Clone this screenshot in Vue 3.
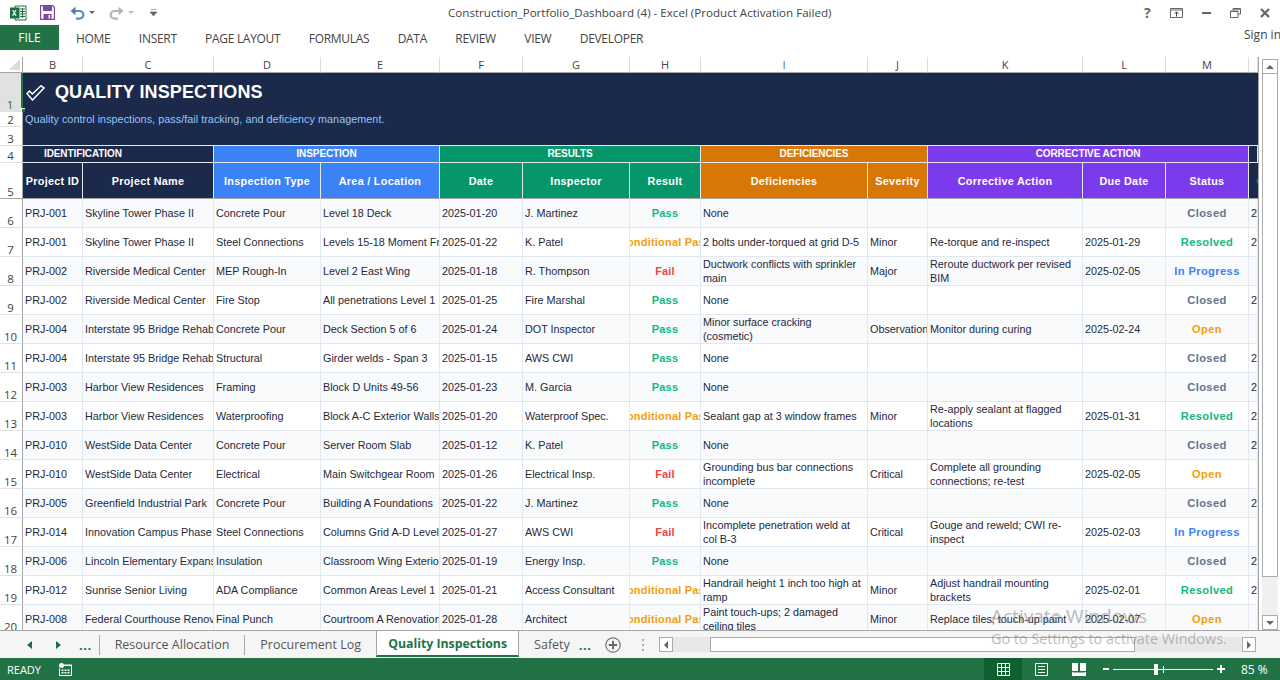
<script setup>
const tabs = ['HOME', 'INSERT', 'PAGE LAYOUT', 'FORMULAS', 'DATA', 'REVIEW', 'VIEW', 'DEVELOPER']
const colLetters = ['B', 'C', 'D', 'E', 'F', 'G', 'H', 'I', 'J', 'K', 'L', 'M', '']
const groups = [
  { t: 'IDENTIFICATION', s: 2, c: 'navy', left: true },
  { t: 'INSPECTION', s: 2, c: 'blue' },
  { t: 'RESULTS', s: 3, c: 'green' },
  { t: 'DEFICIENCIES', s: 2, c: 'orange' },
  { t: 'CORRECTIVE ACTION', s: 3, c: 'purple' },
  { t: '', s: 1, c: 'navy' }
]
const heads = [
  ['Project ID', 'navy'], ['Project Name', 'navy'], ['Inspection Type', 'blue'], ['Area / Location', 'blue'],
  ['Date', 'green'], ['Inspector', 'green'], ['Result', 'green'], ['Deficiencies', 'orange'], ['Severity', 'orange'],
  ['Corrective Action', 'purple'], ['Due Date', 'purple'], ['Status', 'purple']
]
const rows = [
  ['PRJ-001', 'Skyline Tower Phase II', 'Concrete Pour', 'Level 18 Deck', '2025-01-20', 'J. Martinez', 'Pass', 'None', '', '', '', 'Closed'],
  ['PRJ-001', 'Skyline Tower Phase II', 'Steel Connections', 'Levels 15-18 Moment Frames', '2025-01-22', 'K. Patel', 'Conditional Pass', '2 bolts under-torqued at grid D-5', 'Minor', 'Re-torque and re-inspect', '2025-01-29', 'Resolved'],
  ['PRJ-002', 'Riverside Medical Center', 'MEP Rough-In', 'Level 2 East Wing', '2025-01-18', 'R. Thompson', 'Fail', 'Ductwork conflicts with sprinkler main', 'Major', 'Reroute ductwork per revised BIM', '2025-02-05', 'In Progress'],
  ['PRJ-002', 'Riverside Medical Center', 'Fire Stop', 'All penetrations Level 1', '2025-01-25', 'Fire Marshal', 'Pass', 'None', '', '', '', 'Closed'],
  ['PRJ-004', 'Interstate 95 Bridge Rehab', 'Concrete Pour', 'Deck Section 5 of 6', '2025-01-24', 'DOT Inspector', 'Pass', 'Minor surface cracking (cosmetic)', 'Observation', 'Monitor during curing', '2025-02-24', 'Open'],
  ['PRJ-004', 'Interstate 95 Bridge Rehab', 'Structural', 'Girder welds - Span 3', '2025-01-15', 'AWS CWI', 'Pass', 'None', '', '', '', 'Closed'],
  ['PRJ-003', 'Harbor View Residences', 'Framing', 'Block D Units 49-56', '2025-01-23', 'M. Garcia', 'Pass', 'None', '', '', '', 'Closed'],
  ['PRJ-003', 'Harbor View Residences', 'Waterproofing', 'Block A-C Exterior Walls', '2025-01-20', 'Waterproof Spec.', 'Conditional Pass', 'Sealant gap at 3 window frames', 'Minor', 'Re-apply sealant at flagged locations', '2025-01-31', 'Resolved'],
  ['PRJ-010', 'WestSide Data Center', 'Concrete Pour', 'Server Room Slab', '2025-01-12', 'K. Patel', 'Pass', 'None', '', '', '', 'Closed'],
  ['PRJ-010', 'WestSide Data Center', 'Electrical', 'Main Switchgear Room', '2025-01-26', 'Electrical Insp.', 'Fail', 'Grounding bus bar connections incomplete', 'Critical', 'Complete all grounding connections; re-test', '2025-02-05', 'Open'],
  ['PRJ-005', 'Greenfield Industrial Park', 'Concrete Pour', 'Building A Foundations', '2025-01-22', 'J. Martinez', 'Pass', 'None', '', '', '', 'Closed'],
  ['PRJ-014', 'Innovation Campus Phase 1', 'Steel Connections', 'Columns Grid A-D Level 2', '2025-01-27', 'AWS CWI', 'Fail', 'Incomplete penetration weld at col B-3', 'Critical', 'Gouge and reweld; CWI re-inspect', '2025-02-03', 'In Progress'],
  ['PRJ-006', 'Lincoln Elementary Expansion', 'Insulation', 'Classroom Wing Exterior', '2025-01-19', 'Energy Insp.', 'Pass', 'None', '', '', '', 'Closed'],
  ['PRJ-012', 'Sunrise Senior Living', 'ADA Compliance', 'Common Areas Level 1', '2025-01-21', 'Access Consultant', 'Conditional Pass', 'Handrail height 1 inch too high at ramp', 'Minor', 'Adjust handrail mounting brackets', '2025-02-01', 'Resolved'],
  ['PRJ-008', 'Federal Courthouse Renovation', 'Final Punch', 'Courtroom A Renovation', '2025-01-28', 'Architect', 'Conditional Pass', 'Paint touch-ups; 2 damaged ceiling tiles', 'Minor', 'Replace tiles; touch-up paint', '2025-02-07', 'Open']
]
const tone = {
  Pass: 'pass', Fail: 'fail', 'Conditional Pass': 'cond',
  Closed: 'closed', Resolved: 'pass', 'In Progress': 'prog', Open: 'cond'
}
const hasClosedDate = (r) => r[11] === 'Closed' || r[11] === 'Resolved'
</script>

<template>
  <div class="app">
    <header class="titlebar">
      <div class="qat">
        <svg class="ic-xl" width="17" height="16" viewBox="0 0 17 16">
          <path d="M5 1h11v14H5z" fill="#fff" stroke="#217346"/>
          <path d="M10 4h5M10 6.500h5M10 9h5M10 11.500h5M12.500 3v10" stroke="#217346" fill="none"/>
          <rect x="0" y="2.500" width="9.500" height="11" fill="#1d6f42"/>
          <path d="M2.200 5l1.500 2.600L2 10.800h1.400l.9-1.900.9 1.900h1.500L5 7.600 6.500 5H5.200l-.9 1.700L3.500 5z" fill="#fff"/>
        </svg>
        <svg class="ic-save" width="15" height="15" viewBox="0 0 15 15">
          <path d="M.5.500h12l2 2v12H.5z" fill="#fff" stroke="#7d4b9e" stroke-width="1.400"/>
          <rect x="3" y="1" width="9" height="5" fill="#7d4b9e"/>
          <rect x="3.500" y="9" width="8" height="5.500" fill="#7d4b9e"/>
          <rect x="8.500" y="10" width="1.500" height="3.500" fill="#fff"/>
        </svg>
        <svg class="ic-undo" width="15" height="14" viewBox="0 0 15 14">
          <path d="M2 5h7.500a3.800 3.800 0 0 1 0 7.600H6" fill="none" stroke="#5b8bbf" stroke-width="2.200"/>
          <path d="M5.500 0.800v8.400L0.500 5z" fill="#4a7db5"/>
        </svg>
        <span class="caret"></span>
        <svg class="ic-redo" width="15" height="14" viewBox="0 0 15 14">
          <path d="M13 5H5.500a3.800 3.800 0 0 0 0 7.600H9" fill="none" stroke="#b5b5b5" stroke-width="2.200"/>
          <path d="M9.500 0.800v8.400L14.500 5z" fill="#b5b5b5"/>
        </svg>
        <span class="caret light"></span>
        <svg class="ic-cust" width="7" height="8" viewBox="0 0 7 8">
          <path d="M1 .5h5M0 3h7L3.500 7z" fill="#666" stroke="#666" stroke-width=".6"/>
        </svg>
      </div>
      <div class="doc">Construction_Portfolio_Dashboard (4) - Excel (Product Activation Failed)</div>
      <div class="winbtns">
        <span class="help">?</span>
        <svg width="13" height="10" viewBox="0 0 13 10"><path d="M.5.500h12v9H.5z" fill="none" stroke="#666"/><path d="M.5 2h12" stroke="#666"/><path d="M6.500 8.500V4M4.500 5.800l2-2 2 2" fill="none" stroke="#444"/></svg>
        <svg width="9" height="2" viewBox="0 0 9 2"><rect width="9" height="2" fill="#666"/></svg>
        <svg width="11" height="10" viewBox="0 0 11 10"><path d="M3 2V.5h7.500V6H8M.5 3h7.500v6.500H.5z" fill="none" stroke="#666"/><path d="M.5 3.500h7.500M3 1.200h7.500" stroke="#666"/></svg>
        <svg width="10" height="10" viewBox="0 0 10 10"><path d="M1 1l8 8M9 1L1 9" stroke="#666" stroke-width="2.200"/></svg>
      </div>
    </header>

    <nav class="ribbon">
      <div class="file">FILE</div>
      <div class="rtabs"><span v-for="t in tabs" :key="t">{{ t }}</span></div>
      <div class="signin">Sign in</div>
    </nav>

    <main class="work">
      <div class="sheet">
        <div class="corner"><i></i></div>
        <div v-for="(c, i) in colLetters" :key="'c' + i" class="colhead">{{ c }}</div>

        <div class="banner">
          <div class="bt">
            <svg width="19" height="16" viewBox="0 0 19 16"><path d="M1 8.500L3.500 6l2.800 3L15 .8l3 2.200L6.500 15z" fill="none" stroke="#fff" stroke-width="1.500" stroke-linejoin="miter"/></svg>
            <span>QUALITY INSPECTIONS</span>
          </div>
          <div class="bs">Quality control inspections, pass/fail tracking, and deficiency management.</div>
        </div>

        <div class="rowhead sel">1<i class="handle"></i></div>
        <div class="rowhead">2</div>
        <div class="rowhead">3</div>

        <div class="rowhead">4</div>
        <div v-for="g in groups" :key="g.t" class="group" :class="[g.c, { left: g.left }]" :style="{ gridColumn: 'span ' + g.s }">{{ g.t }}</div>

        <div class="rowhead hdr">5</div>
        <div v-for="h in heads" :key="h[0]" class="head" :class="h[1]"><span>{{ h[0] }}</span></div>
        <div class="head navy lastcol"><em>Closed Date</em></div>

        <template v-for="(r, i) in rows" :key="i">
          <div class="rowhead">{{ i + 6 }}</div>
          <div v-for="(v, j) in r" :key="j" class="cell" :class="{
            odd: i % 2 === 0,
            mid: j === 6 || j === 11,
            res: j === 6,
            wrap: j === 7 || j === 9,
            [tone[v] || '']: j === 6 || j === 11
          }"><span>{{ v }}</span></div>
          <div class="cell" :class="{ odd: i % 2 === 0 }"><span>{{ hasClosedDate(r) ? '2025-01-20' : '' }}</span></div>
        </template>
      </div>

      <aside class="vscroll">
        <div class="sbtn"><b class="up"></b></div>
        <div class="vthumb"></div>
        <div class="sbtn low"><b class="down"></b></div>
      </aside>
    </main>

    <section class="tabsbar">
      <svg class="arrow a1" width="5" height="8" viewBox="0 0 5 8"><path d="M5 0v8L0 4z" fill="#1d6f42"/></svg>
      <svg class="arrow a2" width="5" height="8" viewBox="0 0 5 8"><path d="M0 0v8l5-4z" fill="#1d6f42"/></svg>
      <span class="dots first">...</span>
      <span class="sep"></span>
      <span class="stab">Resource Allocation</span>
      <span class="sep"></span>
      <span class="stab">Procurement Log</span>
      <span class="stab active">Quality Inspections</span>
      <span class="stab safety">Safety</span>
      <span class="dots">...</span>
      <svg class="plus" width="16" height="16" viewBox="0 0 16 16"><circle cx="8" cy="8" r="7.200" fill="none" stroke="#777" stroke-width="1.200"/><path d="M8 3.800v8.400M3.800 8h8.400" stroke="#666" stroke-width="1.800"/></svg>
      <span class="vdots"><i></i><i></i><i></i></span>
      <div class="hscroll">
        <div class="hbtn"><b class="lft"></b></div>
        <div class="htrack"><div class="hthumb"></div></div>
        <div class="hbtn"><b class="rgt"></b></div>
      </div>
    </section>

    <footer class="status">
      <span class="ready">READY</span>
      <svg class="macro" width="13" height="13" viewBox="0 0 13 13"><circle cx="2.500" cy="2.500" r="2.500" fill="#fff"/><path d="M5 1.500h8V13H0V5.500h1V12h11V3H5z" fill="#fff"/><path d="M2.500 6.500h2v1.500h-2zM5.500 6.500h2v1.500h-2zM8.500 6.500h2v1.500h-2zM2.500 9h2v1.500h-2zM5.500 9h2v1.500h-2zM8.500 9h2v1.500h-2z" fill="#fff"/></svg>
      <div class="views">
        <div class="vbtn on">
          <svg width="13" height="13" viewBox="0 0 13 13"><path d="M.5.500h12v12H.5zM4.500.500v12M8.500.500v12M.5 4.500h12M.5 8.500h12" fill="none" stroke="#fff"/></svg>
        </div>
        <div class="vbtn">
          <svg width="13" height="13" viewBox="0 0 13 13"><path d="M.5.500h12v12H.5z" fill="none" stroke="#fff"/><path d="M3 3.500h7M3 6.500h7M3 9.500h7" stroke="#fff"/></svg>
        </div>
        <div class="vbtn">
          <svg width="14" height="13" viewBox="0 0 14 13"><path d="M0 0h6v8H0zM8 0h6v8H8zM0 9.500h14V13H0z" fill="#fff"/><path d="M.5 9V12.500h13V9" fill="none" stroke="#fff"/></svg>
        </div>
      </div>
      <span class="minus"></span>
      <div class="slider"><i class="tick"></i><i class="knob"></i></div>
      <svg class="pls" width="8" height="8" viewBox="0 0 8 8"><path d="M4 0v8M0 4h8" stroke="#fff" stroke-width="2"/></svg>
      <span class="zoomv">85 %</span>
    </footer>

    <div class="watermark">
      <div class="w1">Activate Windows</div>
      <div class="w2">Go to Settings to activate Windows.</div>
    </div>
  </div>
</template>

<style>
html, body { margin: 0; padding: 0; background: #fff; }
</style>

<style scoped>
.app {
  position: relative;
  width: 1280px;
  height: 680px;
  overflow: hidden;
  display: flex;
  flex-direction: column;
  font-family: "Liberation Sans", Arial, sans-serif;
  background: #fff;
}
.titlebar { height: 25px; display: flex; align-items: center; }
.qat { display: flex; align-items: center; padding-left: 10px; }
.ic-save { margin-left: 13px; }
.ic-undo { margin-left: 15px; }
.caret { width: 0; height: 0; margin-left: 4px; border: 3px solid transparent; border-top: 3px solid #666; border-bottom: 0; }
.caret.light { border-top-color: #bbb; }
.ic-redo { margin-left: 14px; }
.ic-cust { margin-left: 16px; }
.doc {
  margin-left: 291px;
  font: 11.600px "Open Sans", sans-serif;
  color: #444;
  white-space: nowrap;
}
.winbtns { margin-left: auto; display: flex; align-items: center; width: 136px; justify-content: space-between; padding: 0 10px 0 0; box-sizing: border-box; }
.help { font: bold 14px "Open Sans", sans-serif; color: #666; }
.ribbon { height: 25px; display: flex; align-items: center; margin-bottom: 7px; }
.file { width: 59px; height: 25px; background: #217346; color: #fff; font: 12px/25px "Open Sans", sans-serif; text-align: center; }
.rtabs { display: flex; gap: 28.400px; margin-left: 17px; padding-top: 1px; font: 12px "Open Sans", sans-serif; color: #444; letter-spacing: -.3px; }
.signin { margin-left: auto; font: 12px "Open Sans", sans-serif; color: #444; padding-bottom: 6px; width: 36px; white-space: nowrap; }

.work { height: 573px; display: flex; }
.sheet {
  width: 1259px;
  height: 573px;
  overflow: hidden;
  box-sizing: border-box;
  border-right: 1px solid #a6a6a6;
  display: grid;
  grid-template-columns: 23px 60px 131px 107px 119px 83px 107px 71px 167px 60px 155px 83px 83px 9px;
  grid-template-rows: 16px 39px 15px 19px 17px 36px repeat(15, 29px);
  grid-auto-flow: dense;
  font-size: 10.800px;
  color: #1e293b;
}
.corner { background: #fff; border-right: 1px solid #a6a6a6; border-bottom: 1px solid #a6a6a6; box-sizing: border-box; display: flex; align-items: flex-end; justify-content: flex-end; padding: 0 2px 2px 0; }
.corner i { width: 0; height: 0; border-left: 11px solid transparent; border-bottom: 11px solid #dcdcdc; }
.colhead {
  box-sizing: border-box;
  border-right: 1px solid #dcdcdc;
  border-bottom: 1px solid #a6a6a6;
  font: 11px/15px "Open Sans", sans-serif;
  color: #444;
  text-align: center;
}
.colhead:nth-child(9) { color: #2a6fc4; }
.rowhead {
  grid-column: 1;
  box-sizing: border-box;
  border-right: 1px solid #a6a6a6;
  border-bottom: 1px solid #e1e1e1;
  font: 11.500px/1 "Open Sans", sans-serif;
  color: #444;
  display: flex;
  align-items: flex-end;
  justify-content: center;
  padding: 0 1px 1px 0;
  background: #fff;
}
.rowhead.sel { background: #e1e1e1; color: #217346; border-right: 2px solid #217346; position: relative; overflow: visible; z-index: 2; }
.rowhead.sel .handle { position: absolute; right: -4px; bottom: -1px; width: 3px; height: 3px; background: #217346; border-top: 1px solid #fff; border-left: 1px solid #fff; }
.rowhead.hdr { border-bottom: 1px solid #a6a6a6; }
.banner {
  grid-column: 2 / -1;
  grid-row: 2 / 5;
  background: #1b2a4a;
  border-bottom: 1px solid #e2e8f0;
  box-sizing: border-box;
  display: grid;
  grid-template-rows: 39px 14px;
  overflow: hidden;
}
.bt { display: flex; align-items: center; gap: 10px; padding-left: 3px; color: #fff; font-weight: 700; font-size: 18px; letter-spacing: .1px; white-space: nowrap; }
.bs { color: #93c5fd; padding-left: 2px; line-height: 14px; white-space: nowrap; font-size: 10.800px; letter-spacing: .04px; }
.group {
  box-sizing: border-box;
  border-right: 1px solid #e2e8f0;
  border-bottom: 1px solid #e2e8f0;
  color: #fff;
  font-weight: 700;
  font-size: 10px;
  letter-spacing: -.1px;
  line-height: 16px;
  text-align: center;
  white-space: nowrap;
  overflow: hidden;
}
.group.left { text-align: left; padding-left: 21px; }
.navy { background: #1b2a4a; }
.blue { background: #3b82f6; }
.green { background: #059669; }
.orange { background: #d97706; }
.purple { background: #7c3aed; }
.head {
  box-sizing: border-box;
  border-right: 1px solid #e2e8f0;
  border-bottom: 1px solid #a6a6a6;
  color: #fff;
  font-weight: 700;
  font-size: 10.800px;
  letter-spacing: .3px;
  display: flex;
  align-items: center;
  justify-content: center;
  overflow: hidden;
  white-space: nowrap;
}
.lastcol { border-right: 0; justify-content: flex-start; padding-left: 8px; }
.lastcol em { font-style: normal; color: #60a5fa; }
.cell {
  box-sizing: border-box;
  border-right: 1px solid #e2e8f0;
  border-bottom: 1px solid #e2e8f0;
  background: #fff;
  padding: 0 0 0 2px;
  display: flex;
  align-items: center;
  overflow: hidden;
  white-space: nowrap;
}
.cell.odd { background: #f8fafc; }
.cell > span { flex: none; }
.cell.wrap { white-space: normal; line-height: 14px; padding-right: 4px; }
.cell.wrap > span { flex: 1 1 auto; }
.cell.mid { justify-content: center; padding: 0; font-weight: 700; font-size: 11.200px; letter-spacing: .35px; }
.cell.res { font-size: 11px; letter-spacing: .2px; }
.pass { color: #10b981; }
.fail { color: #ef4444; }
.cond { color: #f59e0b; }
.closed { color: #64748b; }
.prog { color: #3b82f6; }

.vscroll { margin-left: 3px; width: 16px; padding-top: 2px; display: flex; flex-direction: column; background: linear-gradient(#fff 20px, #f0f0f0 20px); height: 573px; box-sizing: border-box; }
.sbtn { height: 15px; box-sizing: border-box; border: 1px solid #ababab; background: #fff; display: flex; align-items: center; justify-content: center; }
.sbtn.low { margin-top: 38px; }
.sbtn b { width: 0; height: 0; border: 4px solid transparent; }
.sbtn .up { border-bottom: 4px solid #666; border-top: 0; }
.sbtn .down { border-top: 4px solid #666; border-bottom: 0; }
.vthumb { height: 503px; box-sizing: border-box; border: 1px solid #ababab; border-top: 0; background: #fff; }

.tabsbar {
  height: 28px;
  box-sizing: border-box;
  border-top: 1px solid #a6a6a6;
  background: #f5f5f5;
  display: flex;
  align-items: center;
  font: 12.500px "Open Sans", sans-serif;
  color: #555;
  white-space: nowrap;
}
.arrow.a1 { margin-left: 27px; }
.arrow.a2 { margin-left: 24px; }
.dots { color: #1d6f42; font-weight: 700; letter-spacing: .5px; margin-left: 9px; line-height: 14px; font-size: 13px; }
.dots.first { margin-left: 18px; }
.sep { width: 1px; height: 20px; background: #aaa; }
.dots.first + .sep { margin-left: 7px; }
.stab { padding: 0 15px; }
.stab.active {
  align-self: stretch;
  box-sizing: border-box;
  width: 143px;
  margin: -1px 0 1px 0;
  background: #fff;
  border: 1px solid #a6a6a6;
  border-bottom: 2px solid #217346;
  color: #217346;
  font-weight: 700;
  display: flex;
  align-items: center;
  justify-content: center;
  padding: 0;
  font-size: 12.300px;
}
.stab.safety { padding: 0 0 0 15px; }
.plus { margin-left: 14px; }
.vdots { display: flex; flex-direction: column; gap: 3px; margin-left: 21px; }
.vdots i { width: 2px; height: 2px; background: #aaa; display: block; }
.hscroll { display: flex; margin-left: 15px; width: 597px; height: 15px; align-items: stretch; flex: none; }
.hbtn { width: 14px; box-sizing: border-box; border: 1px solid #ababab; background: #fff; display: flex; align-items: center; justify-content: center; flex: none; }
.hbtn b { width: 0; height: 0; border: 4px solid transparent; }
.hbtn .lft { border-right: 4px solid #666; border-left: 0; }
.hbtn .rgt { border-left: 4px solid #666; border-right: 0; }
.htrack { flex: 1; background: #e8e8e8; display: flex; padding-left: 37px; padding-right: 107px; }
.hthumb { flex: 1; background: #fff; border: 1px solid #ababab; box-sizing: border-box; }

.status {
  height: 22px;
  background: #217346;
  color: #fff;
  display: flex;
  align-items: center;
  font: 11px "Open Sans", sans-serif;
}
.ready { margin-left: 7px; }
.macro { margin-left: 18px; }
.views { display: flex; margin-left: 912px; height: 22px; }
.vbtn { width: 38px; display: flex; align-items: center; justify-content: center; }
.vbtn.on { background: #0f5f31; }
.minus { width: 6px; height: 2px; background: #fff; margin-left: 5px; }
.slider { width: 100px; height: 1px; background: #fff; margin-left: 4px; position: relative; }
.slider .knob { position: absolute; left: 41px; top: -5px; width: 4px; height: 11px; background: #fff; }
.slider .tick { position: absolute; left: 50px; top: -3px; width: 1px; height: 7px; background: #fff; }
.pls { margin-left: 4px; }
.zoomv { margin-left: 16px; font-size: 12px; }

.watermark {
  position: absolute;
  left: 991px;
  top: 603px;
  color: rgba(120, 120, 120, .5);
  font-family: "Open Sans", sans-serif;
  white-space: nowrap;
  pointer-events: none;
}
.w1 { font-size: 19px; line-height: 26px; }
.w2 { font-size: 14.400px; line-height: 18px; margin-top: 1px; }
</style>
